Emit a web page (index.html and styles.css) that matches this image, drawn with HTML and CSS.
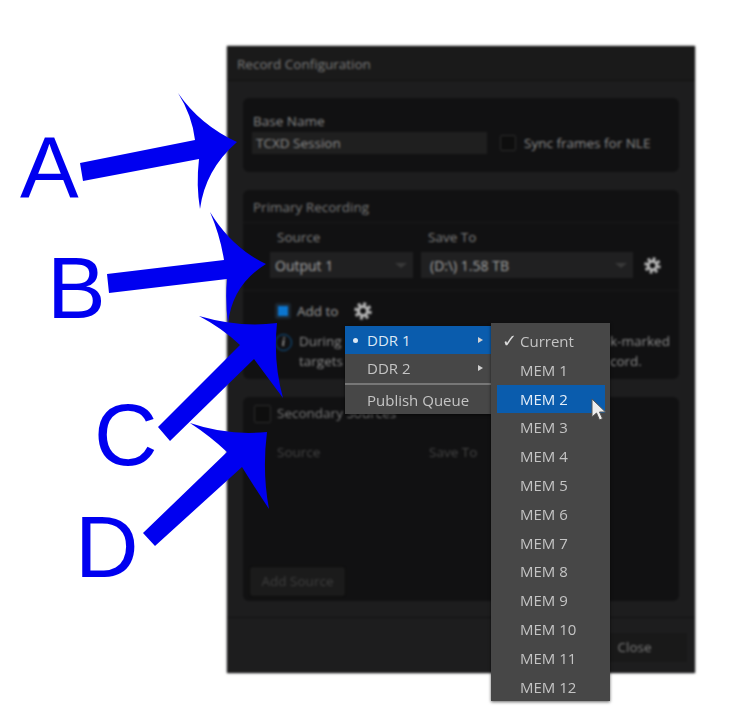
FILE: index.html
```html
<!DOCTYPE html>
<html lang="en">

<head>
    <meta charset="UTF-8">
    <meta name="viewport" content="width=device-width, initial-scale=1.0">
    <title>Record Configuration</title>
    <link rel="stylesheet" href="styles.css">
</head>

<body>
    <svg width="0" height="0" class="defs">
        <symbol id="gear" viewBox="0 0 20 20">
            <circle cx="10" cy="10" r="5" fill="none" stroke="currentColor" stroke-width="3.4"></circle>
            <circle cx="10" cy="10" r="8" fill="none" stroke="currentColor" stroke-width="3.4" stroke-dasharray="3.3 2.98"></circle>
        </symbol>
    </svg>

    <div class="stage">
        <div class="dialog">
            <div class="title-bar">Record Configuration</div>

            <div class="dialog-body">
                <section class="panel panel-base">
                    <div class="field-label">Base Name</div>
                    <div class="base-row">
                        <div class="text-input">TCXD Session</div>
                        <span class="checkbox"></span>
                        <span class="check-label">Sync frames for NLE</span>
                    </div>
                </section>

                <section class="panel panel-primary">
                    <div class="panel-head">Primary Recording</div>
                    <div class="source-grid">
                        <div class="col-label">Source</div>
                        <div class="col-label">Save To</div>
                        <div></div>
                        <div class="select">Output 1<span class="caret"></span></div>
                        <div class="select select-wide">(D:\) 1.58 TB<span class="caret"></span></div>
                        <svg class="gear"><use href="#gear"></use></svg>
                    </div>
                    <div class="add-section">
                        <div class="add-row">
                            <span class="checkbox checkbox-on"></span>
                            <span class="add-label">Add to</span>
                            <svg class="gear gear-add"><use href="#gear"></use></svg>
                        </div>
                        <div class="info-row">
                            <span class="info-icon">i</span>
                            <div class="info-text">
                                <span>During</span>
                                <span>k-marked</span>
                                <span>targets</span>
                                <span>cord.</span>
                            </div>
                        </div>
                    </div>
                </section>

                <section class="panel panel-secondary">
                    <div class="secondary-head">
                        <span class="checkbox checkbox-big"></span>
                        <span class="secondary-title">Secondary Sources</span>
                    </div>
                    <div class="secondary-cols">
                        <span class="dim-label">Source</span>
                        <span class="dim-label">Save To</span>
                    </div>
                    <div class="add-source">Add Source</div>
                </section>
            </div>

            <div class="dialog-foot">
                <div class="close-btn">Close</div>
            </div>
        </div>

        <svg class="arrows" viewBox="0 0 752 727" width="752" height="727">
            <path d="M80 163 L195 140 Q192 115 178 93 Q200 125 237 142 Q205 170 200 209 Q196 185 199 159 L83 181 Z"></path>
            <path d="M107 274 L224 260 Q220 235 210 212 Q232 248 266 264 Q232 285 228 324 Q225 300 227 279 L109 293 Z"></path>
            <path d="M158 427 L240 345 Q222 328 199 316 Q240 328 277 323 Q273 362 283 398 Q268 378 254 359 L170 441 Z"></path>
            <path d="M143 533 L227 452 Q210 436 190 423 Q228 436 267 432 Q262 472 269 509 Q255 488 242 467 L155 546 Z"></path>
        </svg>
        <span class="letter letter-a">A</span>
        <span class="letter letter-b">B</span>
        <span class="letter letter-c">C</span>
        <span class="letter letter-d">D</span>

        <div class="menu menu-main">
            <div class="menu-item menu-item-on"><span class="bullet"></span>DDR 1<span class="sub-arrow"></span></div>
            <div class="menu-item">DDR 2<span class="sub-arrow"></span></div>
            <div class="menu-sep"></div>
            <div class="menu-item">Publish Queue</div>
        </div>

        <div class="menu menu-sub">
            <div class="sub-item"><span class="tick">✓</span>Current</div>
            <div class="sub-item">MEM 1</div>
            <div class="sub-item sub-item-on">MEM 2</div>
            <div class="sub-item">MEM 3</div>
            <div class="sub-item">MEM 4</div>
            <div class="sub-item">MEM 5</div>
            <div class="sub-item">MEM 6</div>
            <div class="sub-item">MEM 7</div>
            <div class="sub-item">MEM 8</div>
            <div class="sub-item">MEM 9</div>
            <div class="sub-item">MEM 10</div>
            <div class="sub-item">MEM 11</div>
            <div class="sub-item">MEM 12</div>
        </div>

        <svg class="cursor" viewBox="0 0 16 24" width="16" height="24">
            <path d="M1 1 L1 19 L5.5 15 L8.5 22 L11.5 20.5 L8.5 14 L14.5 14 Z" fill="#eee" stroke="#555" stroke-width="1"></path>
        </svg>
    </div>
</body>

</html>
```

FILE: styles.css
```css
body {
    margin: 0;
    background-color: #fff;
    font-family: "Open Sans", "Noto Sans", sans-serif;
}

.defs {
    display: block;
    height: 0;
}

.stage {
    position: relative;
    width: 752px;
    height: 727px;
    padding: 46px 0 0 227px;
    box-sizing: border-box;
    overflow: hidden;
}

/* dialog */

.dialog {
    width: 468px;
    height: 627px;
    background-color: #1d1d1e;
    box-shadow: 0 0 2px #777;
    display: flex;
    flex-direction: column;
    filter: blur(0.8px);
    font-size: 13.5px;
    color: #969696;
}

.title-bar {
    height: 35px;
    line-height: 36px;
    padding-left: 10px;
    background-color: #1a1a1a;
    border-bottom: 1px solid #111;
    box-sizing: border-box;
    color: #7c7c7c;
}

.dialog-body {
    flex: 1;
    display: flex;
    flex-direction: column;
    gap: 18px;
    padding: 17px 16px 16px;
}

.panel {
    background-color: #111112;
    border-radius: 6px;
    box-sizing: border-box;
}

.panel-base {
    height: 74px;
    padding: 15px 9px 0;
}

.field-label {
    line-height: 16px;
    padding-left: 1px;
    color: #888;
}

.base-row {
    display: flex;
    align-items: center;
    margin-top: 3px;
}

.text-input {
    width: 235px;
    height: 22px;
    line-height: 22px;
    padding-left: 4px;
    box-sizing: border-box;
    background-color: #1f1f1f;
    color: #8c8c8c;
}

.checkbox {
    width: 16px;
    height: 16px;
    margin-left: 13px;
    box-sizing: border-box;
    background-color: #0e0e0e;
    border: 1px solid #2c2c2c;
    border-radius: 2px;
    flex: none;
}

.check-label {
    margin-left: 8px;
    color: #8c8c8c;
}

.panel-primary {
    height: 189px;
}

.panel-head {
    padding: 9px 0 7px 10px;
    line-height: 16px;
    border-bottom: 1px solid #1a1a1a;
    color: #7a7a7a;
}

.source-grid {
    display: grid;
    grid-template-columns: 143px 212px 24px;
    column-gap: 8px;
    row-gap: 7px;
    padding: 6px 0 12px 27px;
    border-bottom: 1px solid #1a1a1a;
    align-items: center;
}

.col-label {
    line-height: 16px;
    padding-left: 7px;
    color: #808080;
}

.select {
    height: 26px;
    line-height: 27px;
    padding-left: 5px;
    background-color: #202021;
    position: relative;
    font-size: 14px;
    font-weight: 500;
    color: #a6a6a6;
}

.select-wide {
    padding-left: 9px;
}

.caret {
    position: absolute;
    right: 6px;
    top: 11px;
    border-left: 6px solid transparent;
    border-right: 6px solid transparent;
    border-top: 5px solid #3a3a3a;
}

.gear {
    width: 17px;
    height: 17px;
    margin-left: 3px;
    color: #b8b8b8;
}

.add-section {
    padding: 12px 0 0 32px;
}

.add-row {
    display: flex;
    align-items: center;
    height: 16px;
}

.checkbox-on {
    margin-left: 0;
    background-color: #0b75cf;
    border: 3px solid #1c2630;
}

.add-label {
    margin-left: 6px;
    color: #9c9c9c;
}

.gear-add {
    width: 18px;
    height: 18px;
    margin-left: 15px;
}

.info-row {
    display: flex;
    margin-top: 12px;
}

.info-icon {
    width: 17px;
    height: 17px;
    margin-top: 3px;
    flex: none;
    box-sizing: border-box;
    border: 1.5px solid #0f5a96;
    border-radius: 50%;
    font-family: "Liberation Serif", serif;
    font-style: italic;
    font-weight: bold;
    font-size: 12px;
    line-height: 14px;
    text-align: center;
    color: #9a9a9a;
}

.info-text {
    display: grid;
    grid-template-columns: 311px auto;
    margin-left: 7px;
    line-height: 20px;
    color: #8c8c8c;
}

.panel-secondary {
    flex: 1;
    display: flex;
    flex-direction: column;
    padding: 8px 0 5px 7px;
}

.secondary-head {
    display: flex;
    align-items: center;
    height: 18px;
    padding-left: 4px;
}

.checkbox-big {
    width: 17px;
    height: 18px;
    margin-left: 0;
}

.secondary-title {
    margin-left: 6px;
    margin-top: -2px;
    color: #7a7a7a;
}

.secondary-cols {
    display: flex;
    margin-top: 21px;
    padding-left: 27px;
    line-height: 16px;
}

.dim-label {
    width: 152px;
    color: #454545;
}

.add-source {
    margin-top: auto;
    width: 95px;
    height: 29px;
    line-height: 29px;
    text-align: center;
    background-color: #1b1b1b;
    border-radius: 2px;
    box-shadow: 0 0 0 1px #0c0c0c;
    color: #3f3f3f;
}

.dialog-foot {
    height: 56px;
    padding: 15px 8px 0 0;
    box-sizing: border-box;
    display: flex;
    justify-content: flex-end;
    border-top: 1px solid #121212;
}

.close-btn {
    width: 105px;
    height: 29px;
    line-height: 29px;
    text-align: center;
    background-color: #191919;
    color: #7c7c7c;
}

/* annotations */

.arrows {
    position: absolute;
    left: 0;
    top: 0;
    fill: #0000f0;
}

.letter {
    position: absolute;
    font-family: "Liberation Sans", Arial, sans-serif;
    font-size: 88px;
    line-height: 88px;
    color: #0000f0;
}

.letter-a {
    left: 20px;
    top: 124px;
}

.letter-b {
    left: 47px;
    top: 244px;
}

.letter-c {
    left: 94px;
    top: 391px;
}

.letter-d {
    left: 75px;
    top: 503px;
}

/* context menus */

.menu {
    position: absolute;
    background-color: #474747;
    filter: blur(0.6px);
    box-shadow: 0 1px 3px rgba(0, 0, 0, 0.6);
    color: #c4c4c4;
    font-size: 15px;
    font-family: "Open Sans", "Noto Sans", sans-serif;
}

.menu-main {
    left: 345px;
    top: 326px;
    width: 146px;
    height: 88px;
}

.menu-item {
    position: relative;
    height: 28px;
    line-height: 29px;
    padding-left: 22px;
}

.menu-item-on {
    background-color: #0a5cad;
    color: #dbe8f5;
}

.bullet {
    position: absolute;
    left: 8px;
    top: 12px;
    width: 5px;
    height: 5px;
    border-radius: 50%;
    background-color: #dbe8f5;
}

.sub-arrow {
    position: absolute;
    right: 8px;
    top: 11px;
    border-top: 3.5px solid transparent;
    border-bottom: 3.5px solid transparent;
    border-left: 5px solid #d0d0d0;
}

.menu-sep {
    height: 2px;
    margin: 1px 0 1px;
    background-color: #777;
}

.menu-sub {
    left: 491px;
    top: 323px;
    width: 119px;
    height: 378px;
    padding: 4px 5px 0 6px;
    box-sizing: border-box;
}

.sub-item {
    position: relative;
    height: 28.8px;
    line-height: 28px;
    padding-left: 23px;
}

.sub-item-on {
    background-color: #0a5cad;
    color: #e4eef8;
}

.tick {
    position: absolute;
    left: 5px;
    top: -1px;
    font-size: 18px;
    color: #dcdcdc;
}

.cursor {
    position: absolute;
    left: 591px;
    top: 398px;
    filter: blur(0.4px);
}
```
